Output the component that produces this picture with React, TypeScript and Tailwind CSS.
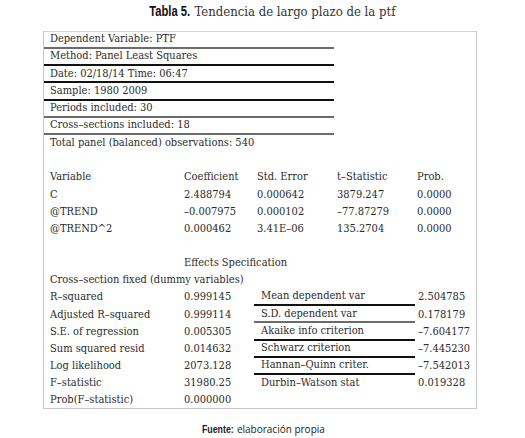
const serif = "font-['DejaVu_Serif',serif] [font-stretch:condensed]";

const header = [
  { text: "Dependent Variable: PTF", line: "border-[#6b6b6b]" },
  { text: "Method: Panel Least Squares", line: "border-[#111]" },
  { text: "Date: 02/18/14 Time: 06:47", line: "border-[#111]" },
  { text: "Sample: 1980 2009", line: "border-[#111]" },
  { text: "Periods included: 30", line: "border-[#6b6b6b]" },
  { text: "Cross–sections included: 18", line: "border-[#6b6b6b]" },
];

const coefs = [
  ["Variable", "Coefficient", "Std. Error", "t–Statistic", "Prob."],
  ["C", "2.488794", "0.000642", "3879.247", "0.0000"],
  ["@TREND", "–0.007975", "0.000102", "–77.87279", "0.0000"],
  ["@TREND^2", "0.000462", "3.41E–06", "135.2704", "0.0000"],
];

const stats: [string, string, string, string, string][] = [
  ["R–squared", "0.999145", "Mean dependent var", "2.504785", "border-[#111]"],
  ["Adjusted R–squared", "0.999114", "S.D. dependent var", "0.178179", "border-[#6b6b6b]"],
  ["S.E. of regression", "0.005305", "Akaike info criterion", "–7.604177", "border-[#111]"],
  ["Sum squared resid", "0.014632", "Schwarz criterion", "–7.445230", "border-[#111]"],
  ["Log likelihood", "2073.128", "Hannan–Quinn criter.", "–7.542013", "border-[#111]"],
  ["F–statistic", "31980.25", "Durbin–Watson stat", "0.019328", ""],
  ["Prob(F–statistic)", "0.000000", "", "", ""],
];

function Row({ children }: { children: React.ReactNode }) {
  return <div className="flex h-[17.15px] items-center">{children}</div>;
}

export default function App() {
  return (
    <div className="w-[525px] h-[438px] bg-white text-[#2b2b2b] relative">
      {/* Title */}
      <div className="h-[23px] flex justify-center items-center">
        <span className="inline-block font-['Liberation_Sans',sans-serif] font-bold text-[14px] text-[#111] scale-x-[0.8] origin-right mr-[4px] ml-[10px]">
          Tabla 5.
        </span>
        <span className={`${serif} text-[13px] text-[#333]`}>Tendencia de largo plazo de la ptf</span>
      </div>

      {/* Output box */}
      <div className={`${serif} text-[11px] mt-[8px] ml-[43px] w-[434px] h-[378px] border border-[#c8c8c8] border-t-[#d4d4d4]`}>
        {header.map((h) => (
          <div key={h.text} className={`w-[290px] h-[17.15px] border-b-2 ${h.line} pl-[6px] flex items-center`}>
            {h.text}
          </div>
        ))}
        <Row>
          <span className="pl-[6px]">Total panel (balanced) observations: 540</span>
        </Row>
        <Row>{null}</Row>

        {coefs.map((r) => (
          <Row key={r[0]}>
            <span className="pl-[6px] w-[140px]">{r[0]}</span>
            <span className="w-[73px]">{r[1]}</span>
            <span className="w-[80px]">{r[2]}</span>
            <span className="w-[80px]">{r[3]}</span>
            <span>{r[4]}</span>
          </Row>
        ))}
        <Row>{null}</Row>
        <Row>
          <span className="pl-[140px]">Effects Specification</span>
        </Row>
        <Row>
          <span className="pl-[6px]">Cross–section fixed (dummy variables)</span>
        </Row>

        {stats.map((s) => (
          <Row key={s[0]}>
            <span className="pl-[6px] w-[140px]">{s[0]}</span>
            <span className="w-[70px]">{s[1]}</span>
            <span className={`w-[161px] h-full flex items-center pl-[7px] ${s[4] ? `border-b-2 ${s[4]}` : ""}`}>
              {s[2]}
            </span>
            <span className="pl-[3px]">{s[3]}</span>
          </Row>
        ))}
      </div>

      {/* Source */}
      <div className="mt-[12px] flex justify-center items-center text-[10px] text-[#222]">
        <span className="inline-block font-['Liberation_Sans',sans-serif] font-bold text-[11px] scale-x-[0.8] origin-right mr-[3px] -ml-[6px]">
          Fuente:
        </span>
        <span className="font-['Open_Sans',sans-serif]">elaboración propia</span>
      </div>
    </div>
  );
}
